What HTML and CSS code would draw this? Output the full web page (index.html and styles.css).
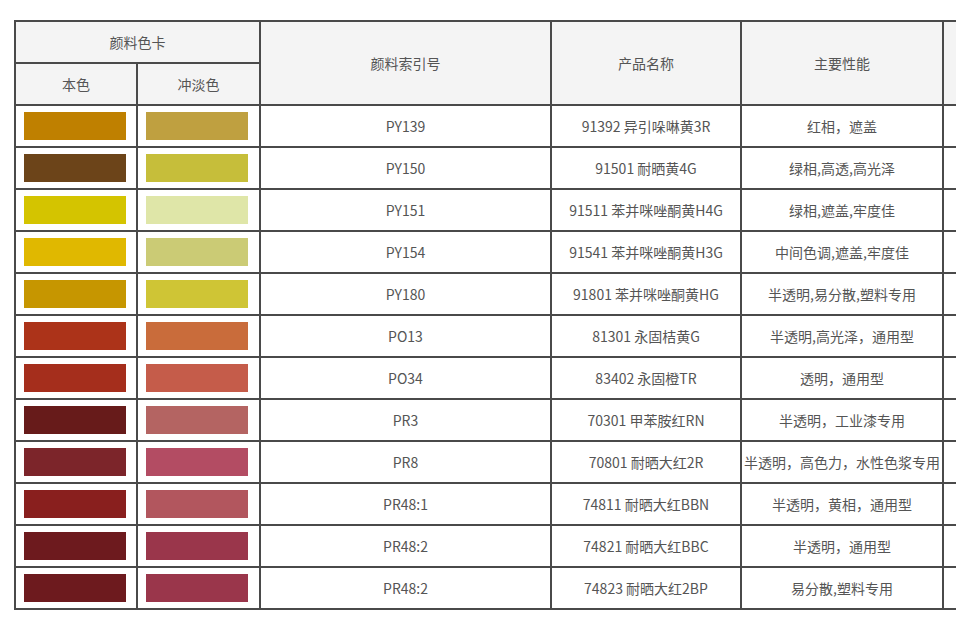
FILE: index.html
```html
<!DOCTYPE html>
<html lang="zh-CN">
<head>
<meta charset="utf-8">
<title>颜料色卡</title>
<link rel="stylesheet" href="styles.css">
</head>
<body>
<div class="page">
<table class="card">
<colgroup>
<col class="c-sw"><col class="c-sw2"><col class="c-idx"><col class="c-name"><col class="c-perf"><col class="c-more">
</colgroup>
<thead>
<tr><th colspan="2">颜料色卡</th><th rowspan="2">颜料索引号</th><th rowspan="2">产品名称</th><th rowspan="2">主要性能</th><th rowspan="2"></th></tr>
<tr><th>本色</th><th>冲淡色</th></tr>
</thead>
<tbody>
<tr><td class="sw"><span class="chip" style="background:#bf8000"></span></td><td class="sw"><span class="chip" style="background:#bfa040"></span></td><td>PY139</td><td>91392 异引哚啉黄3R</td><td>红相，遮盖</td><td></td></tr>
<tr><td class="sw"><span class="chip" style="background:#6c4419"></span></td><td class="sw"><span class="chip" style="background:#c6be3a"></span></td><td>PY150</td><td>91501 耐晒黄4G</td><td>绿相,高透,高光泽</td><td></td></tr>
<tr><td class="sw"><span class="chip" style="background:#d4c400"></span></td><td class="sw"><span class="chip" style="background:#dfe6a8"></span></td><td>PY151</td><td>91511 苯并咪唑酮黄H4G</td><td>绿相,遮盖,牢度佳</td><td></td></tr>
<tr><td class="sw"><span class="chip" style="background:#e0b800"></span></td><td class="sw"><span class="chip" style="background:#cbcb75"></span></td><td>PY154</td><td>91541 苯并咪唑酮黄H3G</td><td>中间色调,遮盖,牢度佳</td><td></td></tr>
<tr><td class="sw"><span class="chip" style="background:#c69600"></span></td><td class="sw"><span class="chip" style="background:#cfc535"></span></td><td>PY180</td><td>91801 苯并咪唑酮黄HG</td><td>半透明,易分散,塑料专用</td><td></td></tr>
<tr><td class="sw"><span class="chip" style="background:#ac3319"></span></td><td class="sw"><span class="chip" style="background:#c96c3b"></span></td><td>PO13</td><td>81301 永固桔黄G</td><td>半透明,高光泽，通用型</td><td></td></tr>
<tr><td class="sw"><span class="chip" style="background:#a52e1c"></span></td><td class="sw"><span class="chip" style="background:#c55c4a"></span></td><td>PO34</td><td>83402 永固橙TR</td><td>透明，通用型</td><td></td></tr>
<tr><td class="sw"><span class="chip" style="background:#671b1a"></span></td><td class="sw"><span class="chip" style="background:#b46462"></span></td><td>PR3</td><td>70301 甲苯胺红RN</td><td>半透明，工业漆专用</td><td></td></tr>
<tr><td class="sw"><span class="chip" style="background:#7c252a"></span></td><td class="sw"><span class="chip" style="background:#b34c63"></span></td><td>PR8</td><td>70801 耐晒大红2R</td><td>半透明，高色力，水性色浆专用</td><td></td></tr>
<tr><td class="sw"><span class="chip" style="background:#891f1e"></span></td><td class="sw"><span class="chip" style="background:#b2565e"></span></td><td>PR48:1</td><td>74811 耐晒大红BBN</td><td>半透明，黄相，通用型</td><td></td></tr>
<tr><td class="sw"><span class="chip" style="background:#6d1a1e"></span></td><td class="sw"><span class="chip" style="background:#9a364b"></span></td><td>PR48:2</td><td>74821 耐晒大红BBC</td><td>半透明，通用型</td><td></td></tr>
<tr><td class="sw"><span class="chip" style="background:#6d1a1e"></span></td><td class="sw"><span class="chip" style="background:#9a364b"></span></td><td>PR48:2</td><td>74823 耐晒大红2BP</td><td>易分散,塑料专用</td><td></td></tr>
</tbody>
</table>
</div>
</body>
</html>
```
FILE: styles.css
```css
html, body {
  margin: 0;
  padding: 0;
  background: #fff;
  overflow: hidden;
}
.page {
  width: 956px;
  height: 627px;
  overflow: hidden;
  padding: 20px 0 0 14px;
  box-sizing: border-box;
}
.card {
  table-layout: fixed;
  border-collapse: separate;
  border-spacing: 0;
  border: 1px solid #4a4a4a;
  width: 1128px;
  font-family: "Noto Sans CJK SC", "Microsoft YaHei", sans-serif;
  font-size: 14px;
  color: #555;
}
.c-sw { width: 122px; }
.c-sw2 { width: 123px; }
.c-idx { width: 291px; }
.c-name { width: 190px; }
.c-perf { width: 202px; }
.c-more { width: 200px; }
.card tr {
  height: 42px;
}
.card th, .card td {
  border: 1px solid #4a4a4a;
  padding: 0;
  text-align: center;
  vertical-align: middle;
  font-weight: normal;
  white-space: nowrap;
  overflow: hidden;
  line-height: 20px;
}
.card th {
  background: #f4f4f4;
}
.card td {
  background: #fff;
}
.card td.sw {
  text-align: left;
  padding-left: 8px;
}
.chip {
  display: block;
  width: 102px;
  height: 28px;
}
```
